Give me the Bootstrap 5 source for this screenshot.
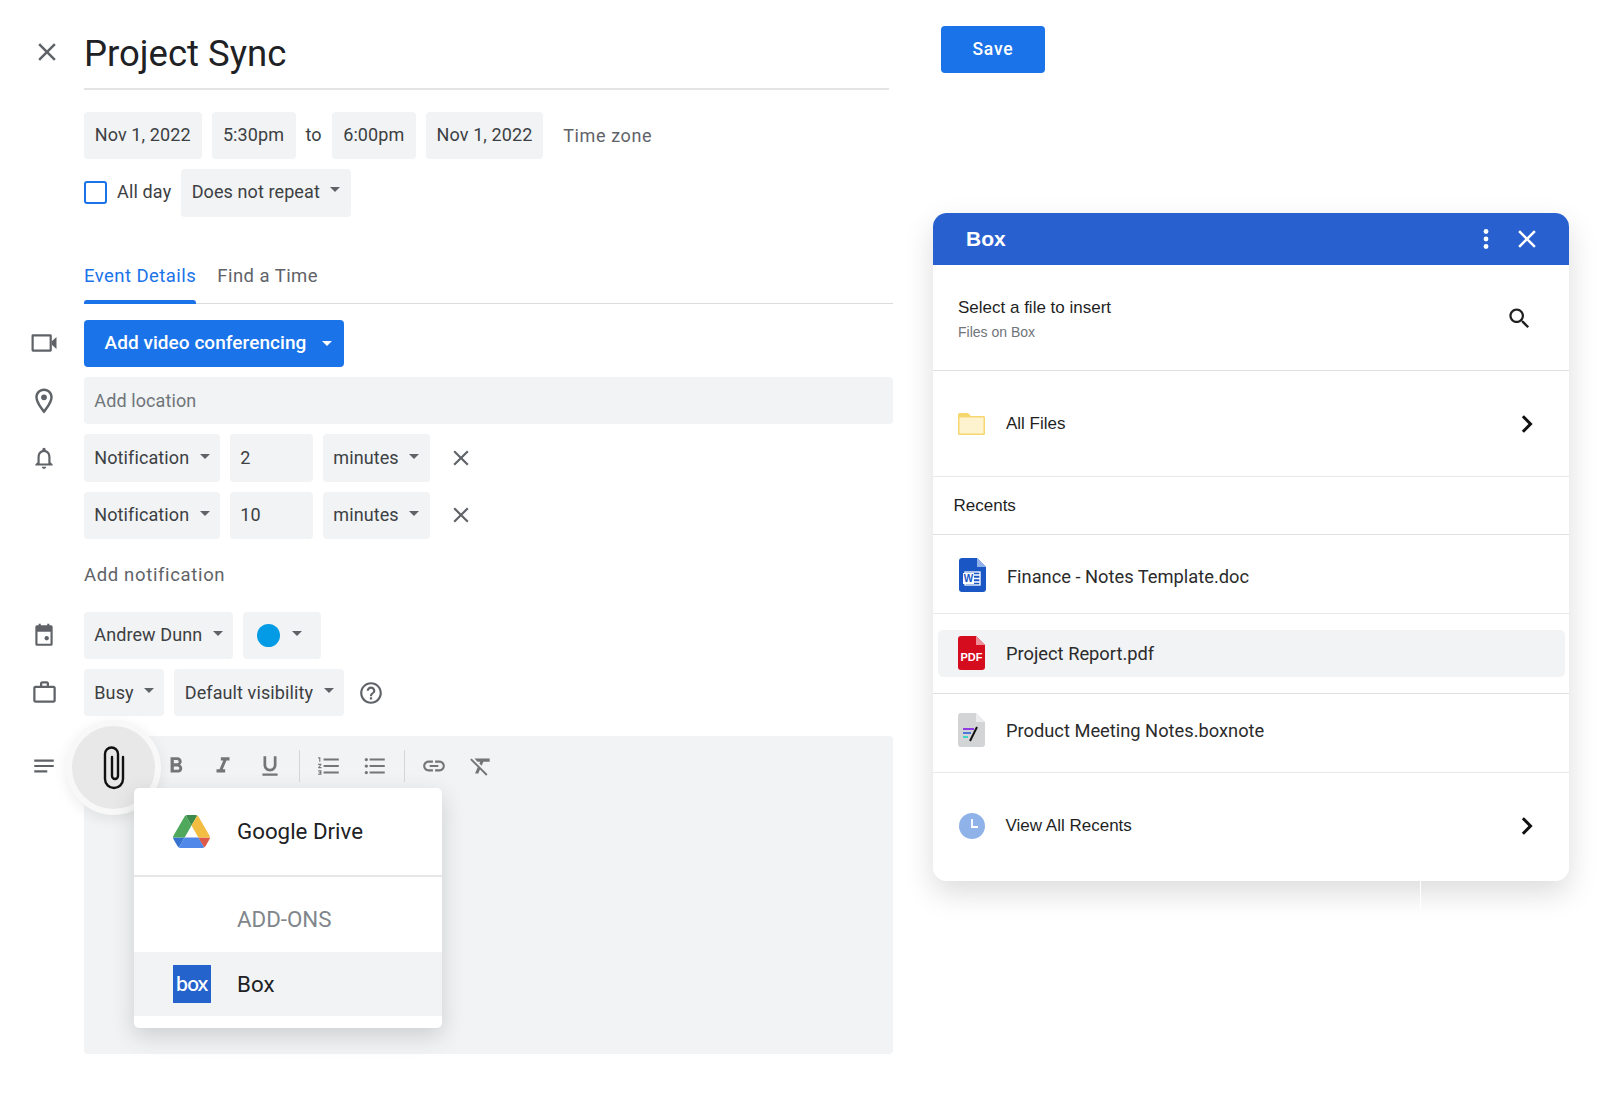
<!doctype html>
<html lang="en"><head><meta charset="utf-8"><title>Project Sync</title>
<link href="https://cdn.jsdelivr.net/npm/bootstrap@5.3.0/dist/css/bootstrap.min.css" rel="stylesheet">
<style>
html,body{height:1094px;overflow:hidden;background:#fff}
body{font-family:Roboto,"Liberation Sans",sans-serif;color:#3c4043}
.lft{width:920px;flex:none}
.ln{display:flex;align-items:center}
.gut{width:84px;flex:none;display:flex;justify-content:center;padding-left:4px}
.ico{fill:#5f6368;display:block}
.titlewrap{height:90px}
.titlebox{width:805px;height:90px;border-bottom:2px solid #e3e4e6;font-size:36.5px;color:#202124;line-height:1;padding-top:36px}
.closeb{padding-left:10px;padding-top:14px}
.chipx{height:47.3px;display:inline-flex;align-items:center;background:#f1f3f4;border:0;border-radius:4px;padding:0 10.3px 2px;font-size:18px;color:#3c4043;line-height:1;white-space:nowrap;letter-spacing:.1px}
.chipx.btn:hover,.chipx.btn:focus{background:#f1f3f4;color:#3c4043}
.chipx.dropdown-toggle::after{color:#5f6368;margin-left:10.5px;position:relative;top:-2px;vertical-align:middle}
.stack{display:flex;flex-direction:column;gap:10px}
.rowgap{display:flex;align-items:center;gap:10px}
.timex{width:84px;justify-content:center}
.datex{width:117.5px;justify-content:center}
.tzone{font-size:18px;color:#5f6368;margin-left:10px;letter-spacing:.6px}
.dt1{margin-top:22px}
.allday{font-size:18px;color:#3c4043;letter-spacing:.15px;padding-bottom:2px}
.cbx.form-check-input{width:23px;height:23px;margin:0;border:2px solid #1a73e8;border-radius:3px}
.tabsx{margin-left:84px;width:809px;height:57px;margin-top:30px;border-bottom:1px solid #dadce0;gap:21px;flex-wrap:nowrap;align-items:flex-end}
.tabsx .nav-link{padding:0 0 12px;height:56px;display:flex;align-items:flex-end;font-size:18.5px;color:#5f6368;letter-spacing:.45px;border-radius:0}
.tabsx .nav-link.active{color:#1a73e8;position:relative}
.tabsx .nav-link.active::after{content:"";position:absolute;left:0;right:0;bottom:-1px;height:4px;background:#1a73e8;border-radius:3px 3px 0 0}
.frm{margin-top:16.2px}
.frm .chipx{padding-bottom:0}
.frm .vc{background:#1a73e8;color:#fff;font-weight:500;padding:0 12px 2px 20.5px;font-size:19px;letter-spacing:.05px}
.vc.btn:hover,.vc.btn:focus{background:#1a73e8;color:#fff}
.vc.dropdown-toggle::after{color:#fff;margin-left:16px;top:1px}
.locx{width:809px;color:#70757a;background:#f1f3f4}
.num{width:83px}
.xb{margin-left:8.500px;display:flex}
.addn{height:52.8px;display:flex;align-items:center;padding:2px 0 0 84px;font-size:18.5px;color:#5f6368;letter-spacing:.65px}
.frm .colorx{padding:0 19px 0 14px}
.dotx{width:23px;height:23px;border-radius:50%;background:#039be5;display:inline-block;margin-right:1px}
.edrow{position:relative;display:flex;margin-top:20px}
.edx{width:809px;height:318px;background:#f1f3f4;border-radius:4px}
.tb{height:60px;display:flex;align-items:center;padding-left:69.2px}
.tbi{width:46.6px;display:flex;justify-content:center}
.tbi svg{fill:#757575}
.sepx{width:12.4px;display:flex;justify-content:center}
.sepx i{display:block;width:1px;height:32px;background:#d5d6d8}
.gutl{height:60px;align-items:center}
.attach{position:absolute;left:66px;top:-16px;width:95px;height:95px;border-radius:50%;background:#e8e8e8;border:6px solid #f8f8f8;box-shadow:0 4px 14px rgba(0,0,0,.08);display:flex;align-items:center;justify-content:center}
.pop{position:absolute;left:134px;top:52px;width:308px;height:240px;background:#fff;border-radius:5px;box-shadow:0 8px 22px rgba(60,64,67,.2);overflow:hidden;display:flex;flex-direction:column}
.popi{display:flex;align-items:center;font-size:22.3px;color:#202124}
.popi .ic{width:103px;padding-left:39px;flex:none;display:flex}
.p1{height:87px}
.pdiv{height:2px;background:#e6e6e6}
.p2{height:75px;color:#80868b;padding-top:9px}
.p3{height:64px;background:#f1f3f4}
.boxlg{width:38px;height:38px;background:#2563cc;color:#fff;font-family:"Noto Sans","Liberation Sans",sans-serif;font-weight:500;font-size:20px;line-height:37px;text-align:center;letter-spacing:-1.2px;padding-right:1px}
.rgt{width:636px;margin-left:13px;flex:none;position:relative}
.savex{display:block;margin:26px 0 0 8px;width:104px;height:47px;background:#1a73e8;border:0;border-radius:4px;color:#fff;font-size:17.5px;font-weight:500;letter-spacing:.8px}
.savex.btn:hover{background:#1a73e8;color:#fff}
.panelx{margin-top:140px;height:668px;border:0;border-radius:14px;overflow:hidden;box-shadow:0 12px 30px rgba(0,0,0,.14);font-family:"Liberation Sans",Arial,sans-serif;color:#1f1f1f}
.seamx{position:absolute;left:487px;top:880px;width:1px;height:30px;background:#fff}
.hdx{height:52px;background:#2861cf;color:#fff;display:flex;align-items:center;padding:0 27px 0 33px;font-size:21px;font-weight:700;border:0;border-radius:0}
.hdx svg{fill:#fff}
.rw{display:flex;align-items:center;border:0;border-bottom:1px solid #dedfe0;padding:0;background:#fff;color:#1f1f1f}
.r1{height:105.500px;padding:3px 36px 0 25px}
.r2{height:106px;padding:2px 29px 0 25px;border-bottom-width:2px;border-bottom-color:#e7e8e9}
.r3{height:58px;padding:2px 0 0 20.500px;font-size:17px}
.r4{height:79.500px;border-bottom-width:2px;border-bottom-color:#e7e8e9;padding-left:26px;padding-top:6px}
.r4 svg{margin-top:-4px}
.r6 svg{margin-top:-2px}
.r5{height:79.500px;padding:0 4.5px}
.r6{height:79px;border-bottom-width:2px;border-bottom-color:#e7e8e9;padding-left:25px;padding-bottom:3px}
.r7{height:108px;border:0;padding:0 29px 2px 25.500px}
.t16{font-size:17px}
.sm{font-size:14px;color:#70757a;margin-top:1px}
.doc{font-family:Roboto,sans-serif;font-size:18.300px;color:#2b2b2b;margin-left:21px}
.hl{display:flex;align-items:center;background:#f1f3f4;border-radius:5px;height:47px;width:100%;padding-left:20.5px}
.lb{margin-left:21px;font-size:17px}
</style></head>
<body>
<div class="d-flex">
<div class="lft">
  <div class="ln titlewrap">
    <div class="gut closeb"><svg class="ico" width="30" height="30" viewBox="0 0 24 24"><path d="M19 6.41L17.59 5 12 10.59 6.41 5 5 6.41 10.59 12 5 17.59 6.41 19 12 13.41 17.59 19 19 17.59 13.41 12z"/></svg></div>
    <div class="titlebox">Project Sync</div>
  </div>
  <div class="stack dt1" style="padding-left:84px">
    <div class="rowgap">
      <div class="chipx datex">Nov 1, 2022</div><div class="chipx timex">5:30pm</div><div class="allday">to</div><div class="chipx timex">6:00pm</div><div class="chipx datex">Nov 1, 2022</div><div class="tzone">Time zone</div>
    </div>
    <div class="rowgap">
      <input class="form-check-input cbx" type="checkbox" aria-label="All day"><div class="allday">All day</div>
      <button class="btn chipx dropdown-toggle" type="button">Does not repeat</button>
    </div>
  </div>
  <ul class="nav tabsx">
    <li class="nav-item"><a class="nav-link active" href="#">Event Details</a></li>
    <li class="nav-item"><a class="nav-link" href="#">Find a Time</a></li>
  </ul>
  <div class="stack frm">
    <div class="ln">
      <div class="gut"><svg class="ico" width="28" height="28" viewBox="0 0 24 24"><path fill-rule="evenodd" d="M2.5 4.5h15a1.2 1.2 0 0 1 1.2 1.2v12.6a1.2 1.2 0 0 1-1.2 1.2h-15a1.2 1.2 0 0 1-1.2-1.2V5.700a1.200 1.200 0 0 1 1.200-1.200zM3.200 6.400v11.200h13.600V6.400z"/><path d="M18.700 10.500l4-3.700v10.400l-4-3.700z"/></svg></div>
      <button class="btn chipx vc dropdown-toggle" type="button">Add video conferencing</button>
    </div>
    <div class="ln">
      <div class="gut"><svg class="ico" width="30" height="30" viewBox="0 0 24 24"><path d="M12 2C8.130 2 5 5.130 5 9c0 5.250 7 13 7 13s7-7.750 7-13c0-3.870-3.130-7-7-7zM7 9c0-2.760 2.240-5 5-5s5 2.240 5 5c0 2.880-2.880 7.190-5 9.880C9.920 16.210 7 11.850 7 9z"/><circle cx="12" cy="9" r="2.300"/></svg></div>
      <div class="form-control chipx locx">Add location</div>
    </div>
    <div class="ln">
      <div class="gut"><svg class="ico" width="26" height="26" viewBox="0 0 24 24"><path d="M12 22c1.100 0 2-.900 2-2h-4c0 1.100.890 2 2 2zm6-6v-5c0-3.070-1.640-5.640-4.500-6.320V4c0-.830-.670-1.500-1.500-1.500s-1.500.670-1.500 1.500v.680C7.630 5.360 6 7.920 6 11v5l-2 2v1h16v-1l-2-2zm-2 1H8v-6c0-2.480 1.510-4.500 4-4.500s4 2.020 4 4.500v6z"/></svg></div>
      <div class="rowgap"><button class="btn chipx dropdown-toggle" type="button">Notification</button><div class="chipx num">2</div><button class="btn chipx dropdown-toggle" type="button">minutes</button>
      <div class="xb"><svg class="ico" width="26" height="26" viewBox="0 0 24 24"><path d="M19 6.410L17.590 5 12 10.590 6.410 5 5 6.410 10.590 12 5 17.590 6.410 19 12 13.410 17.590 19 19 17.590 13.410 12z"/></svg></div></div>
    </div>
    <div class="ln">
      <div class="gut"></div>
      <div class="rowgap"><button class="btn chipx dropdown-toggle" type="button">Notification</button><div class="chipx num">10</div><button class="btn chipx dropdown-toggle" type="button">minutes</button>
      <div class="xb"><svg class="ico" width="26" height="26" viewBox="0 0 24 24"><path d="M19 6.410L17.590 5 12 10.590 6.410 5 5 6.410 10.590 12 5 17.590 6.410 19 12 13.410 17.590 19 19 17.590 13.410 12z"/></svg></div></div>
    </div>
    <div class="addn">Add notification</div>
    <div class="ln">
      <div class="gut"><svg class="ico" width="26" height="26" viewBox="0 0 24 24"><path fill-rule="evenodd" d="M7 1.500h2V3h6V1.500h2V3h1.500A1.500 1.500 0 0 1 20 4.500v16a1.500 1.500 0 0 1-1.500 1.500h-13A1.500 1.500 0 0 1 4 20.500v-16A1.500 1.500 0 0 1 5.500 3H7zM6 9v11h12V9z"/><circle cx="14.500" cy="15" r="2"/></svg></div>
      <div class="rowgap"><button class="btn chipx dropdown-toggle" type="button">Andrew Dunn</button><button class="btn chipx colorx dropdown-toggle" type="button" aria-label="Colour"><span class="dotx"></span></button></div>
    </div>
    <div class="ln">
      <div class="gut"><svg class="ico" width="27" height="27" viewBox="0 0 24 24"><path d="M20 6h-4V4c0-1.110-.890-2-2-2h-4c-1.110 0-2 .890-2 2v2H4c-1.110 0-1.990.890-1.990 2L2 19c0 1.110.890 2 2 2h16c1.110 0 2-.890 2-2V8c0-1.110-.890-2-2-2zM10 4h4v2h-4V4zm10 15H4V8h16v11z"/></svg></div>
      <div class="rowgap"><button class="btn chipx dropdown-toggle" type="button">Busy</button><button class="btn chipx dropdown-toggle" type="button">Default visibility</button>
      <div class="ms-1 d-flex"><svg class="ico" width="26" height="26" viewBox="0 0 24 24"><path d="M11 18h2v-2h-2v2zm1-16C6.480 2 2 6.480 2 12s4.480 10 10 10 10-4.480 10-10S17.520 2 12 2zm0 18c-4.410 0-8-3.590-8-8s3.590-8 8-8 8 3.590 8 8-3.590 8-8 8zm0-14c-2.210 0-4 1.790-4 4h2c0-1.100.900-2 2-2s2 .900 2 2c0 2-3 1.750-3 5h2c0-2.250 3-2.500 3-5 0-2.210-1.790-4-4-4z"/></svg></div></div>
    </div>
  </div>
  <div class="edrow">
    <div class="gut gutl"><svg class="ico" width="26" height="26" viewBox="0 0 24 24"><path d="M3 18h12v-2H3v2zM3 6v2h18V6H3zm0 7h18v-2H3v2z"/></svg></div>
    <div class="edx">
      <div class="tb">
        <div class="tbi"><svg width="26" height="26" viewBox="0 0 24 24"><path d="M15.600 10.790c.970-.670 1.650-1.770 1.650-2.790 0-2.260-1.750-4-4-4H7v14h7.040c2.090 0 3.710-1.700 3.710-3.790 0-1.520-.860-2.820-2.150-3.420zM10 6.500h3c.830 0 1.500.670 1.500 1.500s-.670 1.500-1.500 1.500h-3v-3zm3.500 9H10v-3h3.500c.830 0 1.500.670 1.500 1.500s-.670 1.500-1.500 1.500z"/></svg></div>
        <div class="tbi"><svg width="26" height="26" viewBox="0 0 24 24"><path d="M10 4v3h2.210l-3.420 8H6v3h8v-3h-2.210l3.420-8H18V4z"/></svg></div>
        <div class="tbi"><svg width="26" height="26" viewBox="0 0 24 24"><path d="M12 17c3.310 0 6-2.690 6-6V3h-2.500v8c0 1.930-1.570 3.500-3.500 3.500S8.500 12.930 8.500 11V3H6v8c0 3.310 2.690 6 6 6zm-7 2v2h14v-2H5z"/></svg></div>
        <div class="sepx"><i></i></div>
        <div class="tbi"><svg width="26" height="26" viewBox="0 0 24 24"><path d="M2 17h2v.5H3v1h1v.5H2v1h3v-4H2v1zm1-9h1V4H2v1h1v3zm-1 3h1.800L2 13.100v.900h3v-1H3.200L5 10.900V10H2v1zm5-6v2h14V5H7zm0 14h14v-2H7v2zm0-6h14v-2H7v2z"/></svg></div>
        <div class="tbi"><svg width="26" height="26" viewBox="0 0 24 24"><path d="M4 10.500c-.830 0-1.500.670-1.500 1.500s.670 1.500 1.500 1.500 1.500-.670 1.500-1.500-.670-1.500-1.500-1.500zm0-6c-.830 0-1.500.670-1.500 1.500S3.170 7.500 4 7.500 5.500 6.830 5.500 6 4.830 4.500 4 4.500zm0 12c-.830 0-1.500.680-1.500 1.500s.680 1.500 1.500 1.500 1.500-.680 1.500-1.500-.670-1.500-1.500-1.500zM7 19h14v-2H7v2zm0-6h14v-2H7v2zm0-8v2h14V5H7z"/></svg></div>
        <div class="sepx"><i></i></div>
        <div class="tbi"><svg width="26" height="26" viewBox="0 0 24 24"><path d="M3.900 12c0-1.710 1.390-3.100 3.100-3.100h4V7H7c-2.760 0-5 2.240-5 5s2.240 5 5 5h4v-1.900H7c-1.710 0-3.100-1.390-3.100-3.100zM8 13h8v-2H8v2zm9-6h-4v1.900h4c1.710 0 3.100 1.390 3.100 3.100s-1.390 3.100-3.100 3.100h-4V17h4c2.760 0 5-2.240 5-5s-2.240-5-5-5z"/></svg></div>
        <div class="tbi"><svg width="26" height="26" viewBox="0 0 24 24"><path d="M3.270 5L2 6.270l6.970 6.970L6.500 19h3l1.570-3.660L16.730 21 18 19.730 3.550 5.270 3.270 5zM6 5v.180L8.820 8h2.400l-.720 1.680 2.100 2.100L14.210 8H20V5H6z"/></svg></div>
      </div>
    </div>
    <div class="attach"><svg width="24" height="46" viewBox="0 0 24 46"><path d="M21 12V34a9 9 0 0 1-18 0V9a6.500 6.500 0 0 1 13 0V31a3 3 0 0 1-6 0V12" fill="none" stroke="#111" stroke-width="2.400" stroke-linecap="round"/></svg></div>
    <div class="pop">
      <div class="popi p1"><div class="ic"><svg width="37" height="33" viewBox="0 0 87.300 78"><path d="m6.600 66.850 3.850 6.650c.8 1.400 1.950 2.500 3.300 3.300l13.750-23.800h-27.500c0 1.550.4 3.100 1.200 4.500z" fill="#3673d1"/><path d="m43.650 25-13.750-23.800c-1.350.8-2.500 1.900-3.300 3.300l-25.400 44a9.060 9.060 0 0 0 -1.200 4.500h27.500z" fill="#4fa85c"/><path d="m73.550 76.800c1.350-.8 2.500-1.900 3.300-3.300l1.600-2.750 7.650-13.250c.8-1.400 1.200-2.950 1.200-4.500h-27.502l5.852 11.500z" fill="#de5a48"/><path d="m43.650 25 13.750-23.800c-1.350-.8-2.900-1.200-4.500-1.200h-18.500c-1.600 0-3.150.45-4.500 1.200z" fill="#3c8a4c"/><path d="m59.800 53h-32.300l-13.750 23.800c1.350.8 2.900 1.200 4.500 1.200h50.800c1.600 0 3.150-.45 4.500-1.200z" fill="#4f88e8"/><path d="m73.400 26.500-12.700-22c-.8-1.400-1.950-2.500-3.300-3.300l-13.750 23.800 16.150 28h27.450c0-1.550-.4-3.100-1.200-4.500z" fill="#f3bd42"/></svg></div>Google Drive</div>
      <div class="pdiv"></div>
      <div class="popi p2"><div class="ic"></div>ADD-ONS</div>
      <div class="popi p3"><div class="ic"><div class="boxlg">box</div></div>Box</div>
    </div>
  </div>
</div>
<div class="rgt">
  <button class="btn savex" type="button">Save</button>
  <div class="card panelx">
    <div class="hdx"><span class="flex-grow-1">Box</span>
      <svg width="24" height="26" viewBox="0 0 24 26" style="margin-right:14px"><circle cx="12" cy="5.500" r="2.400"/><circle cx="12" cy="13" r="2.400"/><circle cx="12" cy="20.500" r="2.400"/></svg>
      <svg width="30" height="30" viewBox="0 0 24 24"><path d="M19 6.41L17.59 5 12 10.59 6.41 5 5 6.41 10.59 12 5 17.59 6.41 19 12 13.41 17.59 19 19 17.590 13.41 12z"/></svg>
    </div>
    <div class="list-group list-group-flush">
      <div class="list-group-item rw r1"><div class="flex-grow-1"><div class="t16">Select a file to insert</div><div class="sm">Files on Box</div></div>
        <svg class="d-block" width="27" height="27" viewBox="0 0 24 24" fill="#1f1f1f"><path d="M15.500 14h-.790l-.280-.270C15.410 12.590 16 11.110 16 9.500 16 5.910 13.090 3 9.500 3S3 5.910 3 9.500 5.910 16 9.500 16c1.610 0 3.090-.590 4.230-1.570l.270.280v.790l5 4.990L20.490 19l-4.990-5zm-6 0C7.010 14 5 11.990 5 9.500S7.010 5 9.500 5 14 7.010 14 9.500 11.990 14 9.500 14z"/></svg>
      </div>
      <div class="list-group-item rw r2"><svg width="27" height="22" viewBox="0 0 27 22"><path d="M0 1.500A1.500 1.500 0 0 1 1.500 0H10l3 3h12.500A1.500 1.500 0 0 1 27 4.500V20.500A1.500 1.500 0 0 1 25.500 22H1.500A1.500 1.500 0 0 1 0 20.500z" fill="#f5d76e"/><rect x="1.500" y="4.500" width="24" height="16" fill="#fdf3cf"/></svg><span class="lb flex-grow-1">All Files</span>
        <svg width="28" height="28" viewBox="0 0 24 24" fill="#111"><path d="M8.400 6.300L10.200 4.500l7.500 7.500-7.500 7.500-1.800-1.800L14.100 12z"/></svg></div>
      <div class="list-group-item rw r3">Recents</div>
      <div class="list-group-item rw r4"><svg width="27" height="34" viewBox="0 0 27 34"><path d="M3 0H18L27 9V31a3 3 0 0 1-3 3H3a3 3 0 0 1-3-3V3a3 3 0 0 1 3-3z" fill="#1a56c4"/><path d="M18 0L27 9H18z" fill="#8fb0e8"/><rect x="6" y="14" width="15" height="13" fill="none" stroke="#fff" stroke-width="1.300"/><path d="M15 17h6M15 20.500h6M15 24h6" stroke="#fff" stroke-width="1.300"/><rect x="4" y="15" width="11" height="11" fill="#fff"/><text x="9.500" y="24" font-family="Liberation Sans,sans-serif" font-size="10" font-weight="700" fill="#1a56c4" text-anchor="middle">W</text></svg><span class="doc">Finance - Notes Template.doc</span></div>
      <div class="list-group-item rw r5"><div class="hl"><svg width="27" height="34" viewBox="0 0 27 34"><path d="M3 0H18L27 9V31a3 3 0 0 1-3 3H3a3 3 0 0 1-3-3V3a3 3 0 0 1 3-3z" fill="#d50b1e"/><path d="M18 0L27 9H18z" fill="#ec8f98"/><text x="13.500" y="25" font-family="Liberation Sans,sans-serif" font-size="11" font-weight="700" fill="#fff" text-anchor="middle">PDF</text></svg><span class="doc">Project Report.pdf</span></div></div>
      <div class="list-group-item rw r6"><svg width="27" height="34" viewBox="0 0 27 34"><path d="M3 0H18L27 9V31a3 3 0 0 1-3 3H3a3 3 0 0 1-3-3V3a3 3 0 0 1 3-3z" fill="#d3d4d6"/><path d="M18 0L27 9H18z" fill="#ececee"/><path d="M5 16h11" stroke="#8a2be2" stroke-width="1.800"/><path d="M5 20h8" stroke="#3f6fd8" stroke-width="1.800"/><path d="M5 24h5" stroke="#2dd4c4" stroke-width="1.800"/><path d="M12 28L19 14" stroke="#111" stroke-width="2"/></svg><span class="doc">Product Meeting Notes.boxnote</span></div>
      <div class="list-group-item rw r7"><svg width="26" height="26" viewBox="0 0 26 26"><circle cx="13" cy="13" r="13" fill="#8fb3e8"/><path d="M13 6V14H19" fill="none" stroke="#fff" stroke-width="1.800"/></svg><span class="lb flex-grow-1">View All Recents</span>
        <svg width="28" height="28" viewBox="0 0 24 24" fill="#111"><path d="M8.400 6.300L10.200 4.500l7.500 7.500-7.500 7.500-1.800-1.800L14.100 12z"/></svg></div>
    </div>
  </div>
  <div class="seamx"></div>
</div>
</div>
<script src="https://cdn.jsdelivr.net/npm/bootstrap@5.3.0/dist/js/bootstrap.bundle.min.js"></script>
</body></html>
